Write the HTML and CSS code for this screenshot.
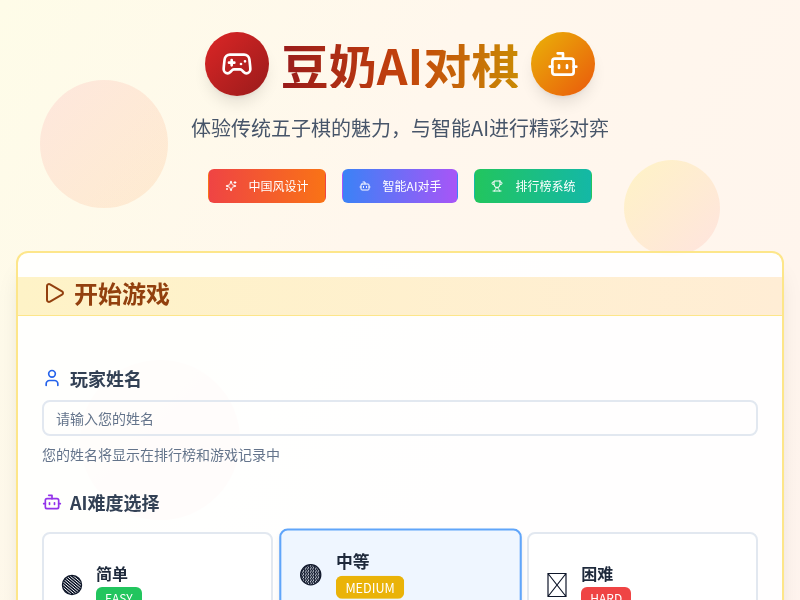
FILE: index.html
```
<!DOCTYPE html>
<html lang="zh-CN">
<head>
<meta charset="UTF-8">
<meta name="viewport" content="width=device-width, initial-scale=1">
<title>豆奶AI对棋</title>
<link rel="stylesheet" href="styles.css">
</head>
<body>
<svg class="sprite" aria-hidden="true">
  <symbol id="bot" viewBox="0 0 24 24">
    <path d="M12 8V4H8"/><rect width="16" height="12" x="4" y="8" rx="2"/>
    <path d="M2 14h2M20 14h2M15 13v2M9 13v2"/>
  </symbol>
</svg>

<div class="backdrop" aria-hidden="true">
  <div class="bubble bubble-red"></div>
  <div class="bubble bubble-yellow"></div>
  <div class="bubble bubble-pink"></div>
</div>

<div class="page">
  <header class="hero">
    <div class="brand">
      <div class="disc disc-red">
        <svg class="icon icon-lg" viewBox="0 0 24 24">
          <path d="M6 11h4M8 9v4M15 12h.01M18 10h.01"/>
          <path d="M17.32 5H6.68a4 4 0 0 0-3.978 3.59c-.006.052-.01.101-.017.152C2.604 9.416 2 14.456 2 16a3 3 0 0 0 3 3c1 0 1.5-.5 2-1l1.414-1.414A2 2 0 0 1 9.828 16h4.344a2 2 0 0 1 1.414.586L17 18c.5.5 1 1 2 1a3 3 0 0 0 3-3c0-1.545-.604-6.584-.685-7.258-.007-.05-.011-.1-.017-.151A4 4 0 0 0 17.32 5z"/>
        </svg>
      </div>
      <h1>豆奶AI对棋</h1>
      <div class="disc disc-orange">
        <svg class="icon icon-lg"><use href="#bot"/></svg>
      </div>
    </div>
    <p class="subtitle">体验传统五子棋的魅力，与智能AI进行精彩对弈</p>
    <div class="tags">
      <span class="tag tag-red">
        <svg class="icon icon-xs" viewBox="0 0 24 24">
          <path d="M9.937 15.5A2 2 0 0 0 8.5 14.063l-6.135-1.582a.5.5 0 0 1 0-.962L8.5 9.936A2 2 0 0 0 9.937 8.5l1.582-6.135a.5.5 0 0 1 .963 0L14.063 8.5A2 2 0 0 0 15.5 9.937l6.135 1.581a.5.5 0 0 1 0 .964L15.5 14.063a2 2 0 0 0-1.437 1.437l-1.582 6.135a.5.5 0 0 1-.963 0z"/>
          <path d="M20 3v4M22 5h-4M4 17v2M5 18H3"/>
        </svg>
        中国风设计
      </span>
      <span class="tag tag-blue">
        <svg class="icon icon-xs"><use href="#bot"/></svg>
        智能AI对手
      </span>
      <span class="tag tag-green">
        <svg class="icon icon-xs" viewBox="0 0 24 24">
          <path d="M6 9H4.5a2.5 2.5 0 0 1 0-5H6M18 9h1.5a2.5 2.5 0 0 0 0-5H18M4 22h16M10 14.66V17c0 .55-.47.98-.97 1.21C7.85 18.75 7 20.24 7 22M14 14.66V17c0 .55.47.98.97 1.21C16.15 18.75 17 20.24 17 22M18 2H6v7a6 6 0 0 0 12 0V2Z"/>
        </svg>
        排行榜系统
      </span>
    </div>
  </header>

  <main class="card">
    <div class="card-header">
      <svg class="icon icon-md" viewBox="0 0 24 24"><path d="M5 5a2 2 0 0 1 3.008-1.728l11.997 6.998a2 2 0 0 1 .003 3.458l-12 7A2 2 0 0 1 5 19z"/></svg>
      <h2>开始游戏</h2>
    </div>
    <form class="card-body">
      <div class="field">
        <label class="field-label" for="player">
          <svg class="icon icon-sm blue" viewBox="0 0 24 24"><path d="M19 21v-2a4 4 0 0 0-4-4H9a4 4 0 0 0-4 4v2"/><circle cx="12" cy="7" r="4"/></svg>
          玩家姓名
        </label>
        <input class="text-input" id="player" type="text" placeholder="请输入您的姓名">
        <p class="hint">您的姓名将显示在排行榜和游戏记录中</p>
      </div>
      <div class="field">
        <h3 class="field-label" id="level-label">
          <svg class="icon icon-sm purple"><use href="#bot"/></svg>
          AI难度选择
        </h3>
        <div class="levels" role="group" aria-labelledby="level-label">
          <button class="level" type="button" aria-pressed="false">
            <svg class="level-mark" viewBox="0 0 24 26">
              <defs>
                <pattern id="hatch" width="2.2" height="2.2" patternUnits="userSpaceOnUse" patternTransform="rotate(40)">
                  <rect width="2.2" height="0.9" fill="#0f172a"/>
                </pattern>
              </defs>
              <circle cx="12" cy="14" r="9.6" fill="url(#hatch)"/>
            </svg>
            <span class="level-text">简单 <span class="badge badge-easy">EASY</span></span>
          </button>
          <button class="level selected" type="button" aria-pressed="true">
            <svg class="level-mark" viewBox="0 0 24 26">
              <defs>
                <pattern id="dots" width="2.4" height="3" patternUnits="userSpaceOnUse">
                  <circle cx="0.6" cy="0.7" r="0.45" fill="#0f172a"/>
                  <circle cx="1.8" cy="2.2" r="0.45" fill="#0f172a"/>
                </pattern>
              </defs>
              <circle cx="12" cy="15" r="9.6" fill="url(#dots)"/>
            </svg>
            <span class="level-text">中等 <span class="badge badge-medium">MEDIUM</span></span>
          </button>
          <button class="level" type="button" aria-pressed="false">
            <svg class="level-mark" viewBox="0 0 24 26">
              <path d="M3 2.5h18v23h-18zM3 2.5l18 23M21 2.5l-18 23"/>
            </svg>
            <span class="level-text">困难 <span class="badge badge-hard">HARD</span></span>
          </button>
        </div>
      </div>
    </form>
  </main>
</div>
</body>
</html>
```
FILE: styles.css
```
* {
  box-sizing: border-box;
  margin: 0;
}

body {
  font-family: "Noto Sans CJK SC", sans-serif;
  font-size: 16px;
  line-height: 24px;
  color: #1e293b;
  background: linear-gradient(to bottom right, #fefce8, #fff7ed 30%, #fff5ed 60%, #fef2f2);
}

.sprite {
  display: none;
}

.icon {
  flex: none;
  fill: none;
  stroke: currentColor;
  stroke-width: 2;
  stroke-linecap: round;
  stroke-linejoin: round;
}

.icon-lg { width: 32px; height: 32px; }
.icon-md { width: 24px; height: 24px; }
.icon-sm { width: 20px; height: 20px; }
.icon-xs { width: 12px; height: 12px; }

.blue { color: #2563eb; }
.purple { color: #9333ea; }

/* background circles */
.backdrop {
  position: fixed;
  inset: 0;
  overflow: hidden;
  pointer-events: none;
}

.bubble {
  position: absolute;
  border-radius: 50%;
  opacity: 0.3;
}

.bubble-red {
  top: 80px;
  left: 40px;
  width: 128px;
  height: 128px;
  opacity: 0.4;
  background: linear-gradient(to bottom right, #fecaca, #fed7aa);
}

.bubble-yellow {
  top: 160px;
  right: 80px;
  width: 96px;
  height: 96px;
  opacity: 0.4;
  background: linear-gradient(to bottom right, #fef08a, #fecaca);
}

.bubble-pink {
  bottom: 80px;
  left: 80px;
  width: 160px;
  height: 160px;
  opacity: 0.4;
  background: linear-gradient(to bottom right, #fed7aa, #fca5a5);
}

.page {
  position: relative;
  min-height: 250vh;
  padding: 32px 16px;
}

.hero {
  text-align: center;
  margin-bottom: 48px;
}

.brand {
  display: flex;
  align-items: center;
  justify-content: center;
  gap: 12px;
  margin-bottom: 16px;
}

.disc {
  display: flex;
  align-items: center;
  justify-content: center;
  width: 64px;
  height: 64px;
  border-radius: 50%;
  color: #fff;
  box-shadow: 0 10px 15px -3px rgba(0, 0, 0, 0.1), 0 4px 6px -4px rgba(0, 0, 0, 0.1);
}

.disc-red { background: linear-gradient(to bottom right, #dc2626, #991b1b); }
.disc-orange { background: linear-gradient(to bottom right, #eab308, #ea580c); }

h1 {
  font-size: 48px;
  line-height: 48px;
  font-weight: 700;
  color: transparent;
  background: linear-gradient(to right, #991b1b, #c2410c, #ca8a04);
  -webkit-background-clip: text;
  background-clip: text;
}

.subtitle {
  font-size: 20px;
  line-height: 32px;
  color: #475569;
  margin-bottom: 25px;
}

.tags {
  display: flex;
  justify-content: center;
  gap: 16px;
}

.tag {
  display: flex;
  align-items: center;
  gap: 12px;
  padding: 8px 16px;
  border: 1px solid transparent;
  border-radius: 6px;
  font-size: 12px;
  line-height: 16px;
  color: #fff;
}

.tag-red { background: linear-gradient(to right, #ef4444, #f97316); }
.tag-blue { background: linear-gradient(to right, #3b82f6, #a855f7); }
.tag-green { background: linear-gradient(to right, #22c55e, #14b8a6); }

.card {
  padding: 24px 0;
  border: 2px solid #fde68a;
  border-radius: 12px;
  background: rgba(255, 255, 255, 0.9);
  box-shadow: 0 20px 25px -5px rgba(0, 0, 0, 0.1), 0 8px 10px -6px rgba(0, 0, 0, 0.1);
}

.card-header {
  display: flex;
  align-items: center;
  gap: 8px;
  padding: 0 24px 6px;
  color: #92400e;
  background: linear-gradient(to right, #fef3c7, #ffedd5);
  border-bottom: 1px solid #fde68a;
}

h2 {
  font-size: 24px;
  line-height: 32px;
}

.card-body {
  display: grid;
  gap: 24px;
  padding: 48px 24px 24px;
}

.field-label {
  display: flex;
  align-items: center;
  gap: 8px;
  font-size: 18px;
  line-height: 28px;
  font-weight: 600;
  color: #334155;
  margin-bottom: 8px;
}

.text-input {
  display: block;
  width: 100%;
  height: 36px;
  padding: 4px 12px;
  border: 2px solid #e2e8f0;
  border-radius: 8px;
  background: transparent;
  font: inherit;
  font-size: 14px;
}

.text-input::placeholder {
  color: #64748b;
}

.hint {
  font-size: 14px;
  line-height: 20px;
  color: #64748b;
  margin-top: 8px;
}

.levels {
  display: grid;
  grid-template-columns: repeat(3, 1fr);
  gap: 12px;
  margin-top: 16px;
}

.level {
  display: flex;
  align-items: flex-start;
  gap: 12px;
  min-height: 140px;
  padding: 25px 16px 16px;
  border: 2px solid #e2e8f0;
  border-radius: 8px;
  background: #fff;
  font: inherit;
  color: #1e293b;
  text-align: left;
}

.level.selected {
  padding-top: 15px;
  border-color: #60a5fa;
  background: #eff6ff;
  box-shadow: 0 4px 6px -1px rgba(0, 0, 0, 0.1);
  transform: scale(1.05);
}

.level-mark {
  flex: none;
  width: 24px;
  height: 26px;
  margin-top: 12px;
  fill: none;
  stroke: #0f172a;
  stroke-width: 1.2;
}

.level-text {
  display: flex;
  flex-direction: column;
  align-items: flex-start;
  line-height: 28px;
  font-weight: 600;
}

.badge {
  padding: 2px 8px;
  border: 1px solid transparent;
  border-radius: 6px;
  font-size: 12px;
  line-height: 16px;
  font-weight: 400;
  color: #fff;
}

.badge-easy { background: #22c55e; }
.badge-medium { background: #eab308; }
.badge-hard { background: #ef4444; }
```
